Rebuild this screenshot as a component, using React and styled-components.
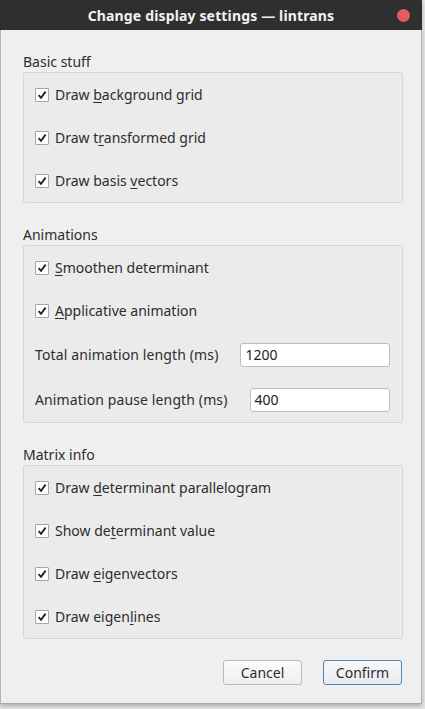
import React from "react";
import styled, { createGlobalStyle } from "styled-components";

const Global = createGlobalStyle`
  html, body { margin: 0; padding: 0; }
  body {
    background: #e6e6e6;
    font-family: "Noto Sans", "Open Sans", sans-serif;
    width: 425px;
    height: 709px;
    overflow: hidden;
  }
`;

const Window = styled.div`
  width: 422px;
  height: 704px;
  box-sizing: border-box;
  background: #efefef;
  border-left: 1px solid #b4b4b4;
  border-right: 1px solid #b4b4b4;
  border-bottom: 1px solid #a8a8a8;
  box-shadow: 0 2px 4px rgba(0, 0, 0, 0.25);
  display: flex;
  flex-direction: column;
`;

const TitleBar = styled.div`
  height: 30px;
  margin: 0 -1px;
  background: #2f2f2f;
  display: grid;
  grid-template-columns: 1fr auto 1fr;
  align-items: center;
`;

const Title = styled.div`
  grid-column: 2;
  color: #f2f2f2;
  font-weight: 700;
  font-size: 14px;
  letter-spacing: 0.15px;
`;

const Close = styled.div`
  grid-column: 3;
  justify-self: end;
  margin-right: 12px;
  width: 13px;
  height: 13px;
  border-radius: 50%;
  background: #e35d5e;
`;

const Content = styled.div`
  flex: 1;
  display: flex;
  flex-direction: column;
  padding: 23px 18px 0 22px;
`;

const Section = styled.section`
  display: flex;
  flex-direction: column;
  & + & {
    margin-top: 23px;
  }
`;

const SectionLabel = styled.div`
  font-size: 14px;
  color: #2d2d2d;
  height: 18px;
  line-height: 18px;
  margin-bottom: 1px;
`;

const GroupBox = styled.div`
  background: #ebebeb;
  border: 1px solid #d6d6d6;
  border-radius: 2px;
  display: flex;
  flex-direction: column;
  padding: 0 12px 0 11px;
`;

const Row = styled.label`
  height: ${(p) => p.$h || 43}px;
  display: flex;
  align-items: center;
  gap: ${(p) => (p.$input ? 22 : 6)}px;
  font-size: 14px;
  color: #2d2d2d;
`;

const InputLabel = styled.span`
  letter-spacing: 0.12px;
`;

const Box = styled.span`
  width: 12px;
  height: 12px;
  border: 1px solid #a6a6a6;
  border-radius: 1px;
  background: #fff;
  display: flex;
  align-items: center;
  justify-content: center;
  flex: none;
`;

const Mn = styled.span`
  text-decoration: underline;
  text-underline-offset: 2px;
`;

const Field = styled.div`
  flex: 1;
  height: 24px;
  box-sizing: border-box;
  background: #fff;
  border: 1px solid #bdbdbd;
  border-radius: 3px;
  display: flex;
  align-items: center;
  padding-left: 4px;
  font-size: 14px;
  color: #222;
`;

const Buttons = styled.div`
  display: flex;
  justify-content: flex-end;
  gap: 21px;
  margin-top: 21px;
  padding-right: 1px;
`;

const Button = styled.button`
  width: 79px;
  height: 25px;
  box-sizing: border-box;
  border-radius: 3px;
  border: 1px solid ${(p) => (p.$primary ? "#4d86b8" : "#b9b9b9")};
  background: ${(p) =>
    p.$primary
      ? "linear-gradient(#f8f8f8, #e8ebee)"
      : "linear-gradient(#fbfbfb, #efefef)"};
  font-family: inherit;
  font-size: 14px;
  color: #2d2d2d;
  padding: 0;
`;

const Check = () => (
  <Box>
    <svg width="10" height="10" viewBox="0 0 10 10">
      <path d="M1.6 5.2 L4 7.8 L8.6 1.6" fill="none" stroke="#1e1e1e" strokeWidth="1.8" />
    </svg>
  </Box>
);

const CheckRow = ({ children }) => (
  <Row>
    <Check />
    <span>{children}</span>
  </Row>
);

export default function App() {
  return (
    <>
      <Global />
      <Window>
        <TitleBar>
          <Title>Change display settings — lintrans</Title>
          <Close />
        </TitleBar>
        <Content>
          <Section>
            <SectionLabel>Basic stuff</SectionLabel>
            <GroupBox>
              <CheckRow>Draw <Mn>b</Mn>ackground grid</CheckRow>
              <CheckRow>Draw t<Mn>r</Mn>ansformed grid</CheckRow>
              <CheckRow>Draw basis <Mn>v</Mn>ectors</CheckRow>
            </GroupBox>
          </Section>
          <Section>
            <SectionLabel>Animations</SectionLabel>
            <GroupBox>
              <CheckRow><Mn>S</Mn>moothen determinant</CheckRow>
              <CheckRow><Mn>A</Mn>pplicative animation</CheckRow>
              <Row $h={45} $input>
                <InputLabel>Total animation length (ms)</InputLabel>
                <Field>1200</Field>
              </Row>
              <Row $h={45} $input>
                <InputLabel>Animation pause length (ms)</InputLabel>
                <Field>400</Field>
              </Row>
            </GroupBox>
          </Section>
          <Section>
            <SectionLabel>Matrix info</SectionLabel>
            <GroupBox>
              <CheckRow>Draw <Mn>d</Mn>eterminant parallelogram</CheckRow>
              <CheckRow>Show de<Mn>t</Mn>erminant value</CheckRow>
              <CheckRow>Draw <Mn>e</Mn>igenvectors</CheckRow>
              <CheckRow>Draw eigen<Mn>l</Mn>ines</CheckRow>
            </GroupBox>
          </Section>
          <Buttons>
            <Button>Cancel</Button>
            <Button $primary>Confirm</Button>
          </Buttons>
        </Content>
      </Window>
    </>
  );
}
